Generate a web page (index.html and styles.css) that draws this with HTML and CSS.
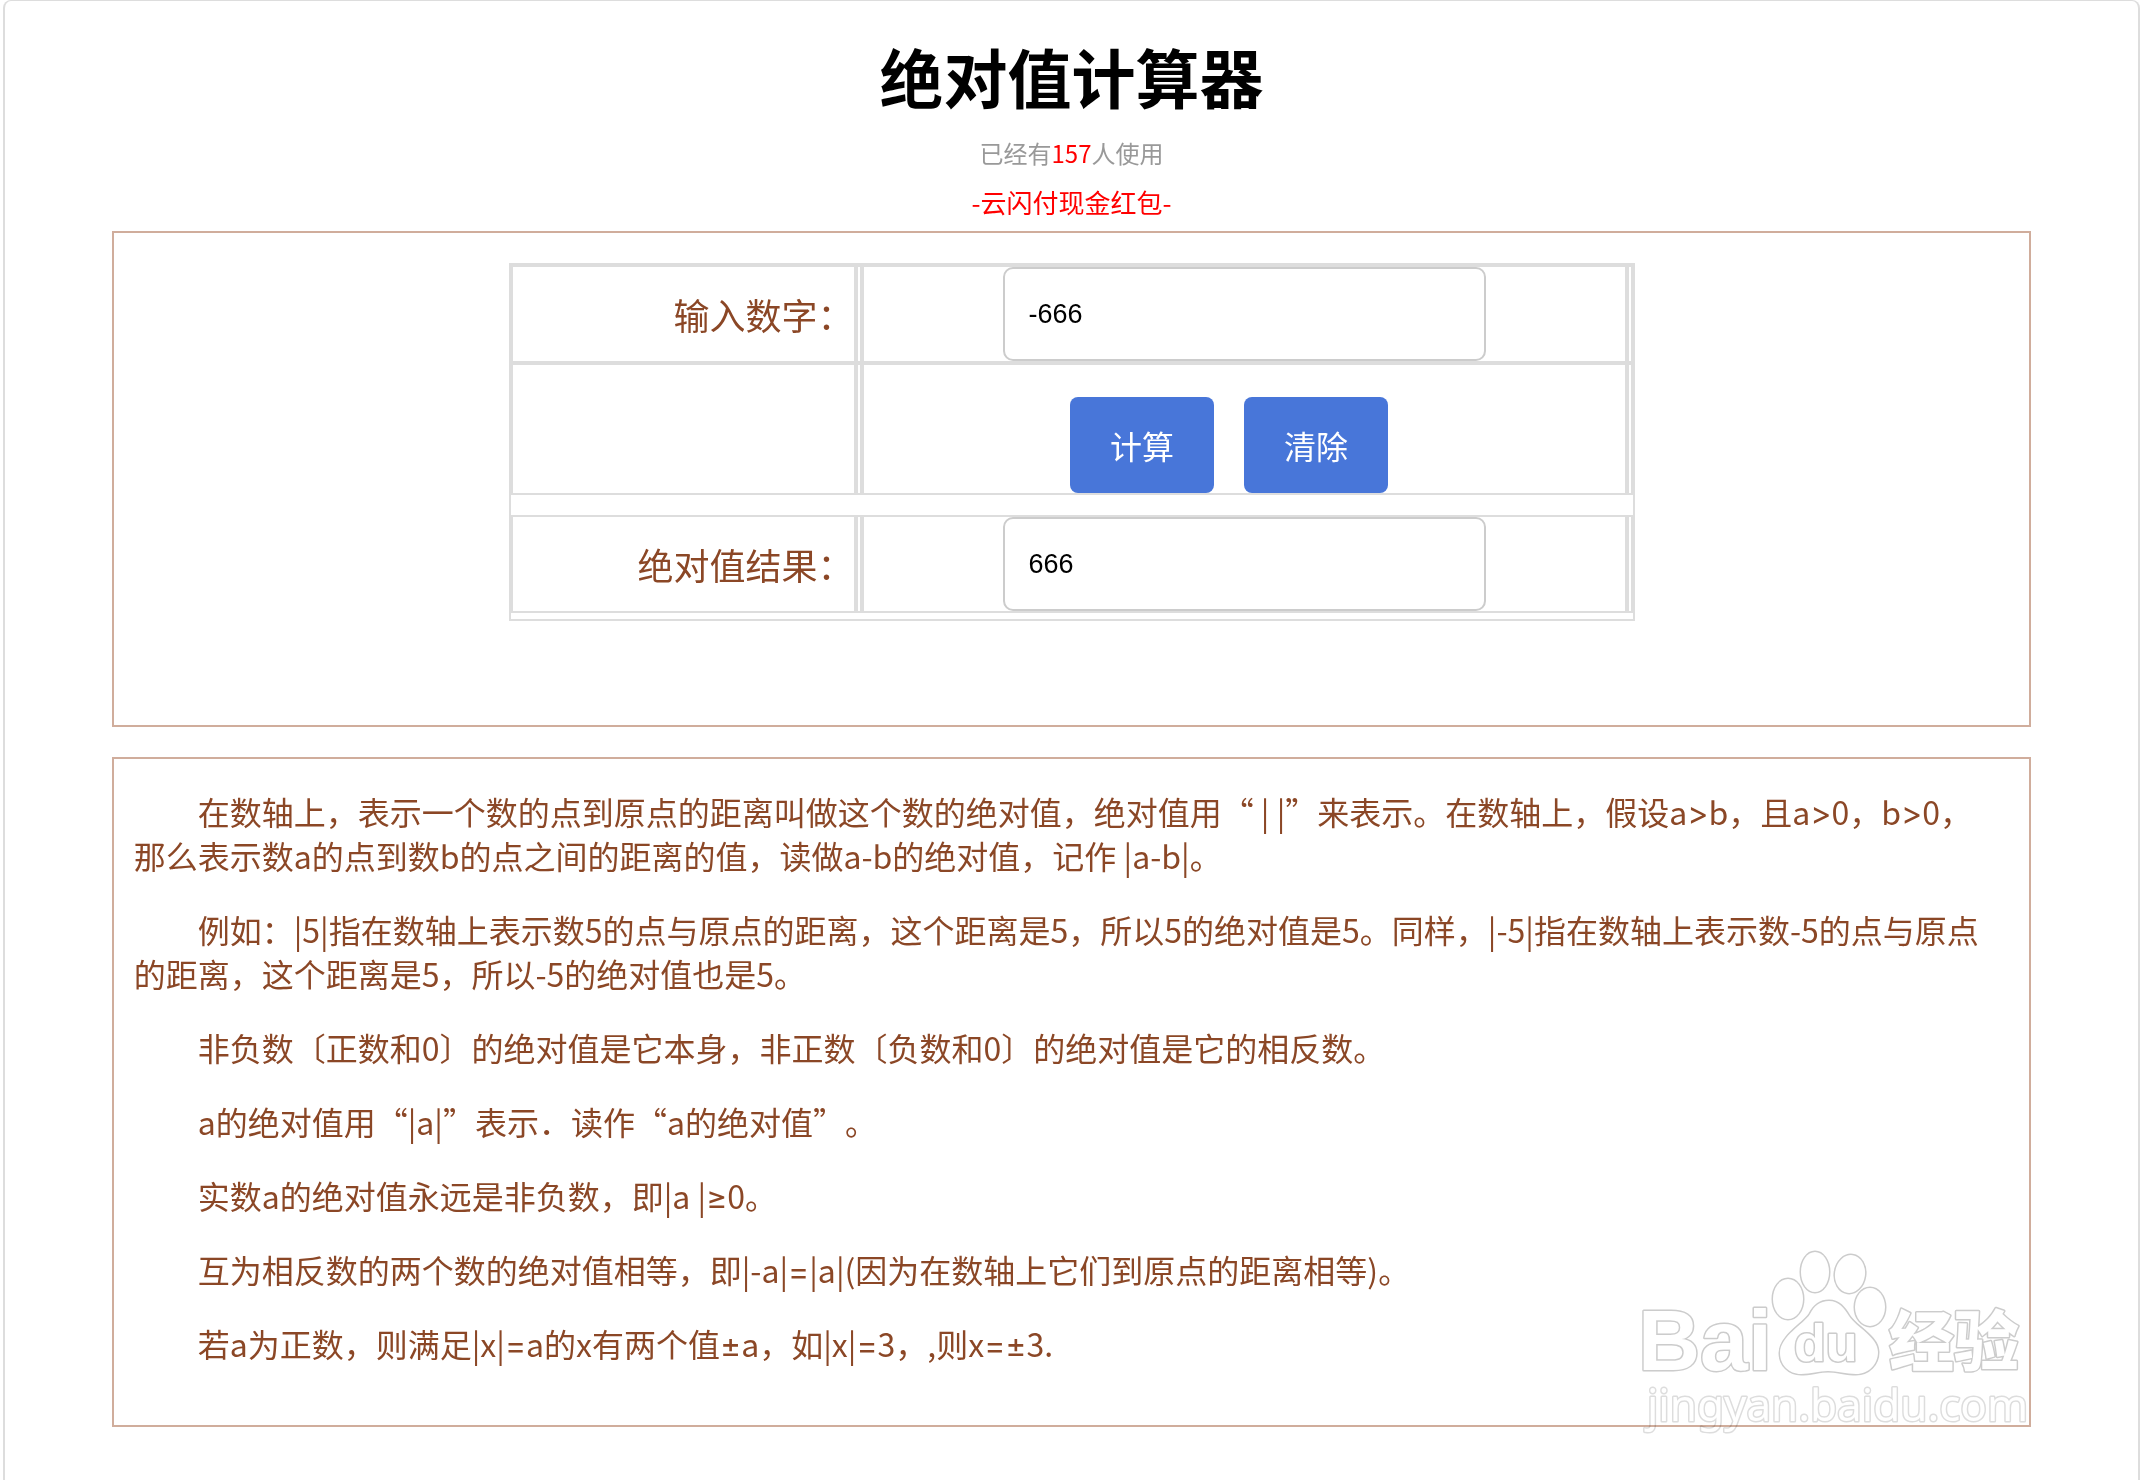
FILE: index.html
```html
<!DOCTYPE html>
<html lang="zh-CN">
<head>
  <meta charset="UTF-8">
  <meta name="viewport" content="width=device-width, initial-scale=1.0">
  <title>绝对值计算器</title>
  <link rel="stylesheet" href="styles.css">
</head>
<body>
  <div class="main">
    <h1>绝对值计算器</h1>
    <p class="used">已经有<span class="count">157</span>人使用</p>
    <p class="ad"><a href="#">-云闪付现金红包-</a></p>

    <div class="box calc">
      <table class="calc-table">
        <colgroup>
          <col class="col-label">
          <col class="col-line">
          <col class="col-value">
          <col class="col-line">
        </colgroup>
        <tr>
          <td class="label"><label for="num">输入数字：</label></td>
          <td></td>
          <td><input type="text" id="num" value="-666"></td>
          <td></td>
        </tr>
        <tr>
          <td></td>
          <td></td>
          <td>
            <div class="buttons">
              <button type="button" onclick="calc()">计算</button>
              <button type="button" onclick="clearAll()">清除</button>
            </div>
          </td>
          <td></td>
        </tr>
        <tr class="gap"><td colspan="4"></td></tr>
        <tr>
          <td class="label"><label for="result">绝对值结果：</label></td>
          <td></td>
          <td><input type="text" id="result" value="666"></td>
          <td></td>
        </tr>
        <tr class="gap-small"><td colspan="4"></td></tr>
      </table>
    </div>

    <div class="box intro">
      <p>在数轴上，表示一个数的点到原点的距离叫做这个数的绝对值，绝对值用“ | |”来表示。在数轴上，假设a<span class="sym">&gt;</span>b，且a<span class="sym">&gt;</span>0，b<span class="sym">&gt;</span>0，那么表示数a的点到数b的点之间的距离的值，读做a-b的绝对值，记作 |a-b|。</p>
      <p>例如：|5|指在数轴上表示数5的点与原点的距离，这个距离是5，所以5的绝对值是5。同样，|-5|指在数轴上表示数-5的点与原点的距离，这个距离是5，所以-5的绝对值也是5。</p>
      <p>非负数〔正数和0〕的绝对值是它本身，非正数〔负数和0〕的绝对值是它的相反数。</p>
      <p>a的绝对值用“|a|”表示．读作“a的绝对值”。</p>
      <p>实数a的绝对值永远是非负数，即|a |<span class="sym">≥</span>0。</p>
      <p>互为相反数的两个数的绝对值相等，即|-a|<span class="sym">=</span>|a|(因为在数轴上它们到原点的距离相等)。</p>
      <p>若a为正数，则满足|x|<span class="sym">=</span>a的x有两个值<span class="sym">±</span>a，如|x|<span class="sym">=</span>3，,则x<span class="sym">=±</span>3.</p>

      <svg class="watermark" width="400" height="200" viewBox="0 0 400 200">
        <text class="latin" x="-5" y="125" font-size="86">Bai</text>
        <ellipse cx="145" cy="54" rx="15" ry="20"/>
        <ellipse cx="172" cy="27" rx="14" ry="20"/>
        <ellipse cx="207" cy="29" rx="15" ry="19" transform="rotate(8 207 29)"/>
        <ellipse cx="227" cy="62" rx="15" ry="19"/>
        <path d="M186 56c-9 0-15 5-19 13c-6 10-30 22-30 39c0 12 9 21 21 21c10 0 18-3 27-3s18 3 28 3c13 0 22-10 22-22c0-15-22-25-29-36c-5-8-10-15-20-15z"/>
        <text class="latin" x="151" y="116" font-size="52">du</text>
        <text class="cjk" x="246" y="120" font-size="65">经验</text>
        <text class="url" x="4" y="176" font-size="44">jingyan.baidu.com</text>
      </svg>
    </div>
  </div>
  <script>
    function calc() {
      var num = parseFloat(document.getElementById('num').value);
      document.getElementById('result').value = isNaN(num) ? '' : Math.abs(num);
    }
    function clearAll() {
      document.getElementById('num').value = '';
      document.getElementById('result').value = '';
    }
  </script>
</body>
</html>
```
FILE: styles.css
```css
* {
  box-sizing: border-box;
}
body {
  margin: 0;
  padding-left: 3px;
  background-color: #fff;
  color: #8b4726;
  font-family: "Noto Sans CJK SC", sans-serif;
  text-spacing-trim: space-all;
}
.main {
  min-height: 100vh;
  border: 2px solid #ddd;
  border-top-width: 1px;
  border-bottom: none;
  border-radius: 8px 8px 0 0;
}
h1 {
  margin: 0;
  padding: 26px 0 4px;
  font-size: 64px;
  line-height: 96px;
  text-align: center;
  color: #000;
}
.used {
  margin: 0;
  font-size: 24px;
  line-height: 52px;
  text-align: center;
  color: #999;
}
.count {
  color: #f00;
}
.ad {
  margin: 0;
  padding-bottom: 6px;
  font-size: 26px;
  line-height: 46px;
  text-align: center;
}
.ad a {
  color: #f00;
  text-decoration: none;
}
.box {
  width: 90%;
  margin: 0 auto 30px;
  border: 2px solid #d0ad9c;
}
.calc {
  padding: 30px 0 104px;
}
.calc-table {
  width: 100%;
  max-width: 1126px;
  margin: 0 auto;
  border: 2px solid #ddd;
  border-spacing: 0;
  table-layout: fixed;
}
.col-label {
  width: 345px;
}
.col-line {
  width: 6px;
}
.calc-table td {
  padding: 0;
  border: 2px solid #ddd;
}
.calc-table .label {
  font-size: 36px;
  line-height: 54px;
  text-align: right;
}
.calc-table .gap td {
  height: 20px;
  border: none;
}
.calc-table .gap-small td {
  height: 6px;
  border: none;
}
.calc-table input {
  display: block;
  width: 483px;
  height: 94px;
  margin: 0 auto;
  padding: 0 24px;
  border: 2px solid #ccc;
  border-radius: 10px;
  background-color: #fff;
  color: #000;
  font-family: "Liberation Sans", Arial, sans-serif;
  font-size: 27px;
}
.buttons {
  display: flex;
  justify-content: center;
  padding-top: 32px;
}
.buttons button {
  width: 144px;
  height: 96px;
  margin: 0 30px 0 0;
  padding: 0;
  border: none;
  border-radius: 8px;
  background-color: #4876d9;
  color: #fff;
  font-family: inherit;
  font-size: 32px;
  cursor: pointer;
}
.intro {
  position: relative;
  padding: 0 32px 30px 20px;
}
.intro p {
  margin: 30px 0;
  font-size: 32px;
  line-height: 44px;
  text-indent: 2em;
}
.sym {
  font-family: Inter, sans-serif;
  line-height: 1;
}
.watermark {
  position: absolute;
  right: -14px;
  bottom: -20px;
  overflow: visible;
  mix-blend-mode: multiply;
  filter: blur(0.6px);
  pointer-events: none;
}
.watermark text,
.watermark ellipse,
.watermark path {
  fill: #fff;
  stroke: #ccc;
  stroke-width: 3px;
  stroke-linejoin: round;
  paint-order: stroke;
}
.watermark .latin {
  font-family: "Liberation Sans", Arial, sans-serif;
  font-weight: bold;
}
.watermark .cjk {
  font-family: "Noto Sans CJK SC", sans-serif;
  font-weight: 900;
}
.watermark .url {
  font-family: "Noto Sans", sans-serif;
  stroke: #ddd;
}
```
